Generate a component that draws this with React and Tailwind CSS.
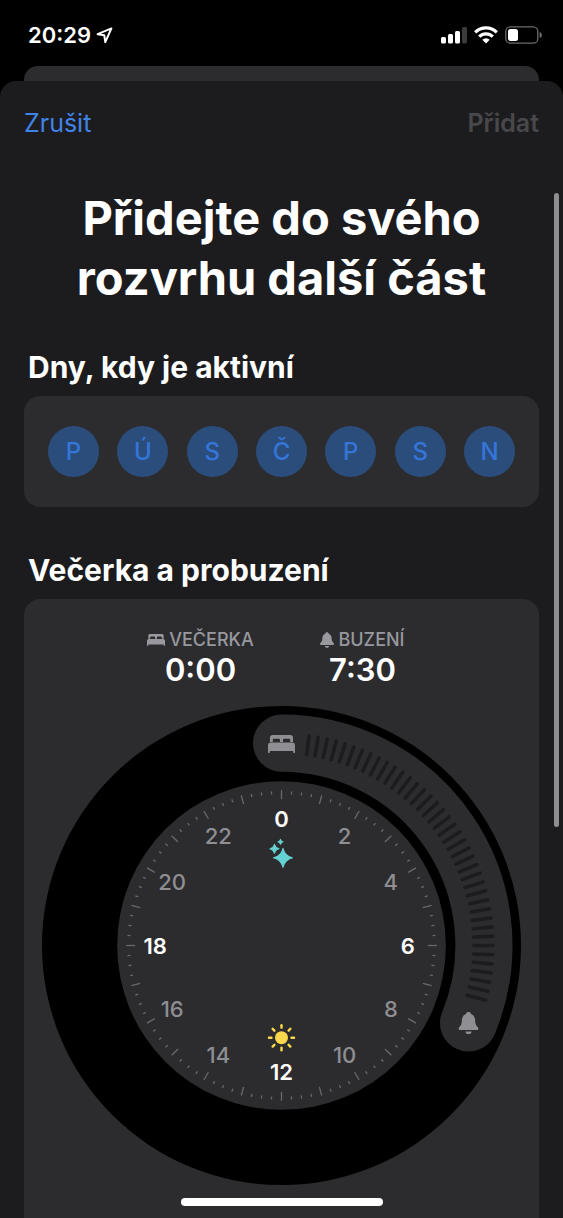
import React from "react";

const days = [
  { short: "P", name: "Pondělí" },
  { short: "Ú", name: "Úterý" },
  { short: "S", name: "Středa" },
  { short: "Č", name: "Čtvrtek" },
  { short: "P", name: "Pátek" },
  { short: "S", name: "Sobota" },
  { short: "N", name: "Neděle" },
];

const CENTER = 239;
const hours = [0, 2, 4, 6, 8, 10, 12, 14, 16, 18, 20, 22];
const quarters = Array.from({ length: 96 }, (_, i) => i);
const grips = Array.from({ length: 40 }, (_, i) => 7.5 + i * 2.5);

// 0° is at the top of the dial, angles grow clockwise
const point = (deg, r) => {
  const a = ((deg - 90) * Math.PI) / 180;
  return { x: CENTER + r * Math.cos(a), y: CENTER + r * Math.sin(a) };
};

const Spoke = ({ deg, from, to, ...rest }) => {
  const a = point(deg, from);
  const b = point(deg, to);
  return <line x1={a.x} y1={a.y} x2={b.x} y2={b.y} {...rest} />;
};

const BedIcon = (props) => (
  <svg viewBox="0 0 27 18" fill="currentColor" aria-hidden="true" {...props}>
    <path
      fillRule="evenodd"
      d="M2 7V2.6C2 1 3 0 4.6 0h17.8C24 0 25 1 25 2.6V7h-2.800V4.800c0-.8-.5-1.200-1.300-1.200h-4.600c-.8 0-1.300.4-1.300 1.200V7h-3V4.800c0-.8-.5-1.200-1.300-1.200H6.100c-.8 0-1.300.4-1.300 1.200V7z"
    />
    <path d="M0 10.300C0 8.600 1 7.500 2.700 7.500h21.600c1.700 0 2.700 1.100 2.700 2.800v6.600c0 .7-.3 1.100-.9 1.100s-1-.4-1-1.100v-1H1.900v1c0 .7-.4 1.100-1 1.100S0 17.600 0 16.900z" />
  </svg>
);

const BellIcon = (props) => (
  <svg viewBox="0 0 20 22" fill="currentColor" aria-hidden="true" {...props}>
    <path d="M10 0c1.500 0 2.400 1 2.600 2.100 2.500 1 3.900 3.200 4 6.200.1 3.600.7 5 2.500 6.800.6.600.9 1.100.9 1.700 0 .8-.6 1.200-1.500 1.200h-17C.6 18 0 17.600 0 16.800c0-.6.3-1.100.9-1.700 1.800-1.800 2.400-3.200 2.500-6.800.1-3 1.500-5.200 4-6.200C7.600 1 8.500 0 10 0z" />
    <path d="M6.800 19.400h6.400c-.2 1.600-1.500 2.600-3.200 2.600s-3-1-3.200-2.600z" />
  </svg>
);

const Sparkle = ({ x, y, r }) => {
  const c = r * 0.2;
  return (
    <path
      d={`M${x} ${y - r}Q${x + c} ${y - c} ${x + r} ${y}Q${x + c} ${y + c} ${x} ${y + r}Q${x - c} ${y + c} ${x - r} ${y}Q${x - c} ${y - c} ${x} ${y - r}Z`}
      fill="#65d1d3"
      stroke="#65d1d3"
      strokeWidth="1"
      strokeLinejoin="round"
    />
  );
};

const StatusBar = () => (
  <div className="flex h-[66px] shrink-0 items-center justify-between pt-1 pr-[21px] pl-7">
    <div className="flex items-center gap-[5px]">
      <span className="text-[22px] font-semibold">20:29</span>
      <svg width="17" height="17" viewBox="0 0 17 17" aria-hidden="true">
        <path
          d="M15.400 1.400L1.600 7.200l6.700 1.100 1 6.800z"
          fill="none"
          stroke="#fff"
          strokeWidth="2"
          strokeLinejoin="round"
        />
      </svg>
    </div>
    <div className="flex items-center gap-[7px]">
      <svg width="26" height="18" viewBox="0 0 26 18" aria-hidden="true">
        <rect x="0" y="11" width="5" height="6.500" rx="1.500" fill="#fff" />
        <rect x="7" y="8" width="5" height="9.500" rx="1.500" fill="#fff" />
        <rect x="14" y="5" width="5" height="12.500" rx="1.500" fill="#fff" />
        <rect x="21" y="1" width="5" height="16.500" rx="1.500" fill="#3a3a3c" />
      </svg>
      <svg width="24" height="18" viewBox="0 0 24 18" aria-hidden="true">
        <g fill="none" stroke="#fff" strokeWidth="3.200">
          <path d="M1.200 6.300a15.200 15.200 0 0 1 21.600 0" />
          <path d="M5.200 10.700a9.500 9.500 0 0 1 13.600 0" />
        </g>
        <path d="M12 17.600l-3.700-3.800a5.300 5.300 0 0 1 7.400 0z" fill="#fff" />
      </svg>
      <svg width="37" height="18" viewBox="0 0 37 18" aria-hidden="true">
        <rect x="0.800" y="0.800" width="32" height="16.400" rx="4.500" fill="none" stroke="#6b6b6b" strokeWidth="1.300" />
        <rect x="3" y="3" width="10" height="12" rx="2.500" fill="#fff" />
        <path d="M34.600 6c1.500.5 2.300 1.500 2.300 3s-.8 2.500-2.300 3z" fill="#6b6b6b" />
      </svg>
    </div>
  </div>
);

const TimeLabel = ({ icon, label, time }) => (
  <div className="flex w-[162px] flex-col items-center">
    <div className="flex h-6 items-center gap-1 text-lg font-medium text-[#98989f]">
      {icon}
      <span>{label}</span>
    </div>
    <span className="text-[31px] leading-9 font-semibold">{time}</span>
  </div>
);

const SleepDial = () => {
  const start = point(0, 202);
  const end = point(112.5, 202);

  return (
    <svg viewBox="0 0 478 478" className="block w-full" role="img" aria-label="Spánek od 0:00 do 7:30">
      <circle cx={CENTER} cy={CENTER} r="239" fill="#000" />
      <circle cx={CENTER} cy={CENTER} r="164" fill="#2c2c2e" />

      {/* sleep range */}
      <path
        d={`M${start.x} ${start.y}A202 202 0 0 1 ${end.x} ${end.y}`}
        fill="none"
        stroke="#2c2c2e"
        strokeWidth="57"
        strokeLinecap="round"
      />
      {grips.map((deg) => (
        <Spoke key={deg} deg={deg} from={192} to={211} stroke="#1c1c1e" strokeWidth="3.500" strokeLinecap="round" />
      ))}
      <BedIcon x={start.x - 13.5} y={start.y - 8} width="27" height="18" className="text-[#8e8e93]" />
      <BellIcon x={end.x - 10} y={end.y - 11} width="20" height="22" className="text-[#8e8e93]" />

      {/* clock face */}
      {quarters.map((q) => (
        <Spoke
          key={q}
          deg={q * 3.75}
          from={q % 4 === 0 ? 146 : 151}
          to={q % 4 === 0 ? 155 : 154}
          stroke="#69696d"
          strokeWidth="1.300"
        />
      ))}
      {hours.map((h) => {
        const p = point(h * 15, 126);
        return (
          <text
            key={h}
            x={p.x}
            y={p.y + 8}
            textAnchor="middle"
            className={h % 6 === 0 ? "fill-white text-[22px] font-semibold" : "fill-[#8e8e93] text-[22px] font-medium"}
          >
            {h}
          </text>
        );
      })}

      <Sparkle x={240.5} y={151.5} r={9.5} />
      <Sparkle x={232} y={142.5} r={4.5} />
      <Sparkle x={238} y={135.5} r={2.5} />

      <g stroke="#fbd84b" strokeWidth="2.400" strokeLinecap="round">
        <circle cx={CENTER} cy="331" r="6.500" fill="#fbd84b" stroke="none" />
        {[0, 45, 90, 135, 180, 225, 270, 315].map((deg) => (
          <line key={deg} x1={CENTER} y1="321" x2={CENTER} y2="318.500" transform={`rotate(${deg} ${CENTER} 331)`} />
        ))}
      </g>
    </svg>
  );
};

const App = () => {
  return (
    <div className="relative flex h-screen flex-col overflow-hidden bg-black font-['Inter','Liberation_Sans',sans-serif] text-white">
      <StatusBar />
      <div className="mx-6 h-[15px] shrink-0 rounded-t-[14px] bg-[#2c2c2e]" />

      <main className="relative min-h-0 flex-1 overflow-hidden rounded-t-[16px] bg-[#1c1c1e] px-6">
        <header className="flex h-[86px] items-center justify-between text-[25px]">
          <button className="text-[#4083e8]">Zrušit</button>
          <button className="font-semibold text-[#48484a]" disabled>
            Přidat
          </button>
        </header>

        <h1 className="mt-[21px] text-center text-[47px] leading-[60px] font-bold">
          Přidejte do svého
          <br />
          rozvrhu další část
        </h1>

        <h2 className="mt-[41px] px-1 text-[30px] leading-9 font-bold">Dny, kdy je aktivní</h2>
        <div className="mt-[11px] flex justify-between rounded-2xl bg-[#2c2c2e] px-6 py-[30px]">
          {days.map((day) => (
            <button
              key={day.name}
              aria-label={day.name}
              className="flex size-[51px] items-center justify-center rounded-full bg-[#2a4d7c] text-2xl font-medium text-[#3575d8]"
            >
              {day.short}
            </button>
          ))}
        </div>

        <h2 className="mt-[45px] px-1 text-[30px] leading-9 font-bold">Večerka a probuzení</h2>
        <div className="mt-[11px] rounded-t-2xl bg-[#2c2c2e] px-[18px] pt-[29px] pb-20">
          <div className="mb-[18px] flex justify-center">
            <TimeLabel icon={<BedIcon className="h-3 w-[18px]" />} label="VEČERKA" time="0:00" />
            <TimeLabel icon={<BellIcon className="h-4 w-[14px]" />} label="BUZENÍ" time="7:30" />
          </div>
          <SleepDial />
        </div>

        {/* scroll indicator */}
        <div className="absolute top-28 right-1 h-[634px] w-[5px] rounded-full bg-[#8e8e90]" />
      </main>

      {/* home indicator */}
      <div className="absolute bottom-3 left-1/2 h-2 w-[202px] -translate-x-1/2 rounded-full bg-white" />
    </div>
  );
};

export default App;
